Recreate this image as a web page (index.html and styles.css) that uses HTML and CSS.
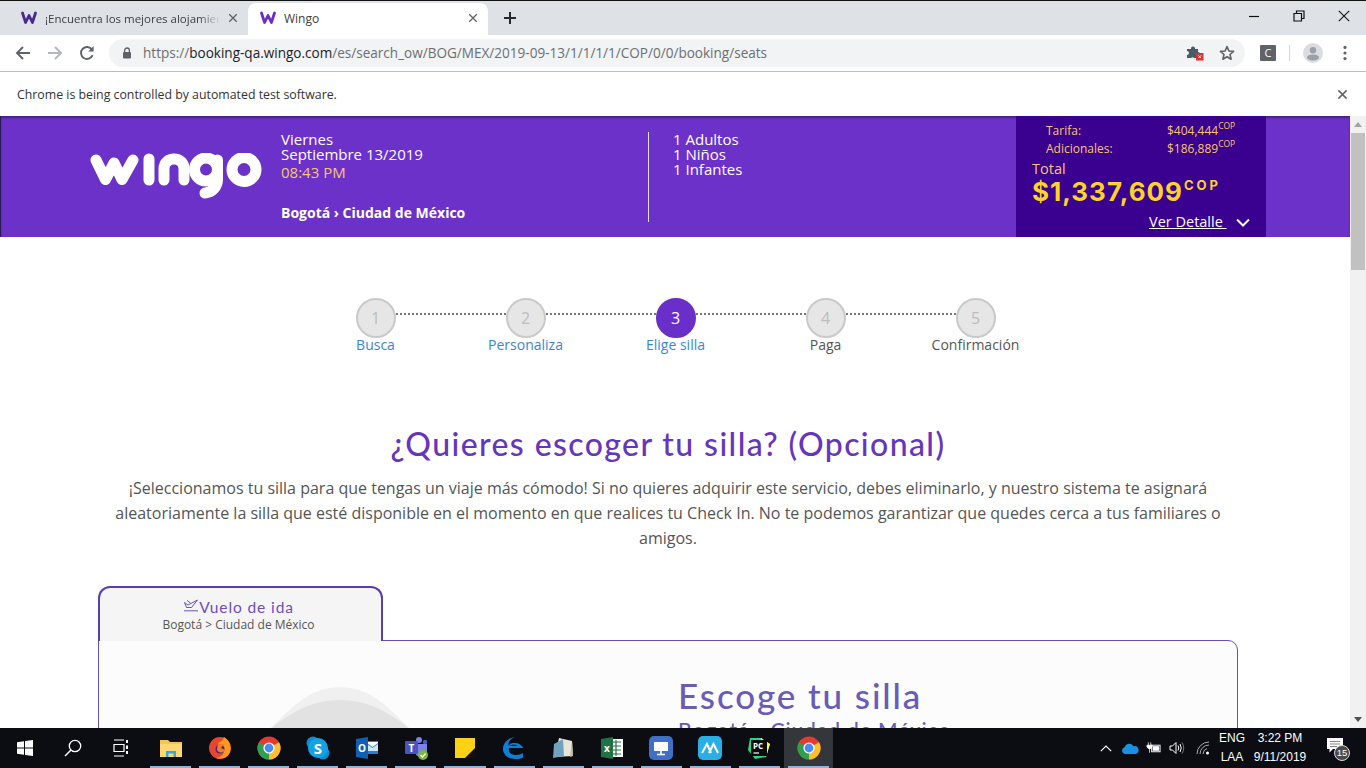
FILE: index.html
```html
<!DOCTYPE html>
<html lang="es">
<head>
<meta charset="utf-8">
<title>Wingo</title>
<link rel="stylesheet" href="styles.css">
</head>
<body>
<svg class="defs" width="0" height="0" aria-hidden="true">
  <symbol id="fav" viewBox="0 0 16 14"><path d="M1.5 2 L4.6 11.5 L8 4.5 L11.4 11.5 L14.5 2" fill="none" stroke="currentColor" stroke-width="2.8" stroke-linejoin="round" stroke-linecap="round"/></symbol>
  <symbol id="x" viewBox="0 0 12 12"><path d="M1.5 1.5 L10.5 10.5 M10.5 1.5 L1.5 10.5" fill="none" stroke="currentColor" stroke-width="1.6"/></symbol>
  <symbol id="chrome" viewBox="0 0 24 24">
    <circle cx="12" cy="12" r="11.5" fill="#e33b2e"/>
    <path d="M12 12 L22 6.2 A11.5 11.5 0 0 1 12 23.5 Z" fill="#fbc02d"/>
    <path d="M12 12 L12 23.5 A11.5 11.5 0 0 1 2 6.2 Z" fill="#2f9e4f"/>
    <circle cx="12" cy="12" r="5.6" fill="#fff"/><circle cx="12" cy="12" r="4.4" fill="#4a8af4"/>
  </symbol>
</svg>

<header class="tabstrip">
  <div class="tab">
    <svg class="fav fav-dark"><use href="#fav"/></svg>
    <span class="tab-title tab-title-cut">¡Encuentra los mejores alojamientos</span>
    <svg class="tab-x"><use href="#x"/></svg>
  </div>
  <div class="tab tab-active">
    <svg class="fav fav-purple"><use href="#fav"/></svg>
    <span class="tab-title">Wingo</span>
    <svg class="tab-x"><use href="#x"/></svg>
  </div>
  <svg class="newtab" viewBox="0 0 14 14"><path d="M7 1 V13 M1 7 H13" stroke="#26282c" stroke-width="2" fill="none"/></svg>
  <div class="winctl">
    <svg viewBox="0 0 12 12"><path d="M1 6.5 H11" stroke="#111" stroke-width="1.2"/></svg>
    <svg viewBox="0 0 12 12"><path d="M1 3.5 H8.5 V11 H1 Z M3.5 3.5 V1 H11 V8.5 H8.5" stroke="#111" stroke-width="1.2" fill="none"/></svg>
    <svg viewBox="0 0 12 12"><path d="M.8 .8 L11.2 11.2 M11.2 .8 L.8 11.2" stroke="#111" stroke-width="1.1" fill="none"/></svg>
  </div>
</header>

<nav class="toolbar">
  <svg class="nav-ic" viewBox="0 0 16 16"><path d="M15 8 H2 M8 2 L2 8 L8 14" fill="none" stroke="#5f6368" stroke-width="1.9"/></svg>
  <svg class="nav-ic" viewBox="0 0 16 16"><path d="M1 8 H14 M8 2 L14 8 L8 14" fill="none" stroke="#b4b7bb" stroke-width="1.9"/></svg>
  <svg class="nav-ic" viewBox="0 0 16 16"><path d="M13.6 10.2 A6 6 0 1 1 13 4.6" fill="none" stroke="#5f6368" stroke-width="1.9"/><path d="M14.6 1 V6.4 H9.2 Z" fill="#5f6368"/></svg>
  <div class="omnibox">
    <svg class="lock" viewBox="0 0 10 12"><path d="M2.6 5 V3.4 A2.4 2.4 0 0 1 7.4 3.4 V5" fill="none" stroke="#5f6368" stroke-width="1.3"/><rect x="1" y="5" width="8" height="6.5" rx="1" fill="#5f6368"/></svg>
    <span class="url">https://<b>booking-qa.wingo.com</b>/es/search_ow/BOG/MEX/2019-09-13/1/1/1/1/COP/0/0/booking/seats</span>
    <svg class="ext" viewBox="0 0 18 18"><path d="M1 5 H5 A2 2 0 0 1 9 4 V5 H12 V8 A2 2 0 0 1 12 12 V14 H8 A2 2 0 0 0 5 14 H1 V11 A2 2 0 0 0 1 7 Z" fill="#4a5a66"/><rect x="10" y="9" width="7.5" height="7.5" fill="#d9333a"/><path d="M12.4 11.4 L15.1 14.1 M15.1 11.4 L12.4 14.1" stroke="#fff"/></svg>
    <svg class="star" viewBox="0 0 16 16"><path d="M8 1.6 L9.9 6 L14.6 6.4 L11 9.5 L12.1 14.2 L8 11.7 L3.9 14.2 L5 9.5 L1.4 6.4 L6.1 6 Z" fill="none" stroke="#5f6368" stroke-width="1.6" stroke-linejoin="round"/></svg>
  </div>
  <span class="cbtn">C</span>
  <span class="sep"></span>
  <svg class="avatar" viewBox="0 0 20 20"><circle cx="10" cy="10" r="10" fill="#dadce0"/><circle cx="10" cy="7.2" r="3.2" fill="#9aa0a6"/><ellipse cx="10" cy="14.4" rx="6" ry="3" fill="#9aa0a6"/></svg>
  <svg class="dots" viewBox="0 0 4 16"><circle cx="2" cy="2.4" r="1.6" fill="#5f6368"/><circle cx="2" cy="8" r="1.6" fill="#5f6368"/><circle cx="2" cy="13.6" r="1.6" fill="#5f6368"/></svg>
</nav>

<div class="infobar">
  <span>Chrome is being controlled by automated test software.</span>
  <svg class="info-x"><use href="#x"/></svg>
</div>

<div class="viewport">
  <main class="page">
    <section class="brandbar">
      <svg class="logo" viewBox="0 0 172 46" role="img" aria-label="wingo">
        <g fill="none" stroke="#fff" stroke-width="11" stroke-linecap="round" stroke-linejoin="round">
          <path d="M6 7 L15.5 26.5 L24 10 L32 26.5 L43 7"/>
          <path d="M59 6 V27"/>
          <path d="M74 27 V16 C74 9 79 6 84 6 C90 6 94 10 94 16 V27"/>
          <circle cx="116" cy="16.5" r="11.5"/>
          <path d="M127.500 7 V26 C127.500 34 122 39.500 115 40"/>
          <circle cx="154" cy="16.500" r="12"/>
        </g>
      </svg>
      <div class="flight">
        <p>Viernes</p>
        <p>Septiembre 13/2019</p>
        <p class="flight-time">08:43 PM</p>
        <p class="flight-route">Bogotá › Ciudad de México</p>
      </div>
      <div class="pax">
        <p>1 Adultos</p>
        <p>1 Niños</p>
        <p>1 Infantes</p>
      </div>
      <aside class="price">
        <div class="price-row"><span>Tarifa:</span><span class="amount">$404,444<sup>COP</sup></span></div>
        <div class="price-row"><span>Adicionales:</span><span class="amount">$186,889<sup>COP</sup></span></div>
        <div class="total-label">Total</div>
        <div class="total">$1,337,609<sup>COP</sup></div>
        <div class="detail"><a>Ver Detalle&nbsp;</a><svg viewBox="0 0 14 9"><path d="M1 1.500 L7 7.500 L13 1.500" fill="none" stroke="#fff" stroke-width="2"/></svg></div>
      </aside>
    </section>

    <ol class="steps">
      <li class="step step-done"><span class="dot">1</span><span class="step-label">Busca</span></li>
      <li class="step step-done"><span class="dot">2</span><span class="step-label">Personaliza</span></li>
      <li class="step step-done step-current"><span class="dot">3</span><span class="step-label">Elige silla</span></li>
      <li class="step"><span class="dot">4</span><span class="step-label">Paga</span></li>
      <li class="step step-last"><span class="dot">5</span><span class="step-label">Confirmación</span></li>
    </ol>

    <div class="content">
      <h1>¿Quieres escoger tu silla? (Opcional)</h1>
      <p class="lead">¡Seleccionamos tu silla para que tengas un viaje más cómodo! Si no quieres adquirir este servicio, debes eliminarlo, y nuestro sistema te asignará aleatoriamente la silla que esté disponible en el momento en que realices tu Check In. No te podemos garantizar que quedes cerca a tus familiares o amigos.</p>

      <div class="flight-tab">
        <div class="flight-tab-title">
          <svg viewBox="0 0 16 13"><path d="M1 11.800 H15 M1.500 3.500 L5 6 L14.500 1 L8.500 8.500 L3.500 8.500 Z M4 1.500 L7.500 4" fill="none" stroke="#6a4fc0" stroke-width="1"/></svg>
          <span>Vuelo de ida</span>
        </div>
        <div class="flight-tab-route">Bogotá &gt; Ciudad de México</div>
      </div>
      <div class="seat-card">
        <div class="plane-col">
          <svg viewBox="0 0 190 60" class="plane"><path d="M8 60 C45 20 65 0 95 0 C125 0 145 20 182 60 Z" fill="#f0f0f0"/><path d="M6 60 C36 30 62 13 95 13 C128 13 154 30 184 60 Z" fill="#e2e2e2"/></svg>
        </div>
        <div class="seat-info">
          <h2>Escoge tu silla</h2>
          <h3>Bogotá - Ciudad de México</h3>
        </div>
      </div>
    </div>
  </main>
  <div class="scrollbar">
    <svg viewBox="0 0 8 5"><path d="M4 0 L8 5 H0 Z" fill="#a3a3a3"/></svg>
    <div class="thumb"></div>
    <svg class="arrow-down" viewBox="0 0 8 5"><path d="M0 0 H8 L4 5 Z" fill="#505050"/></svg>
  </div>
</div>

<footer class="taskbar">
  <div class="task-slot"><svg class="ic-win" viewBox="0 0 16 16"><path d="M0 2.300 L7 1.300 V7.500 H0 Z M8 1.100 L16 0 V7.500 H8 Z M0 8.500 H7 V14.700 L0 13.700 Z M8 8.500 H16 V16 L8 14.900 Z" fill="#fff"/></svg></div>
  <div class="task-slot"><svg class="ic-m" viewBox="0 0 18 18"><circle cx="11" cy="7" r="5.700" fill="none" stroke="#fff" stroke-width="1.300"/><path d="M7 11 L1 17" stroke="#fff" stroke-width="1.500"/></svg></div>
  <div class="task-slot task-slot-last-fixed"><svg class="ic-m" viewBox="0 0 18 18"><path d="M2 1 H12 M2 17 H12 M2 5.500 H12 V12.500 H2 Z" fill="none" stroke="#fff" stroke-width="1.200"/><path d="M15 1 V4 M15 6.500 V10 M15 12 V15" stroke="#fff" stroke-width="2"/></svg></div>
  <div class="task-slot open"><svg class="ic-l" viewBox="0 0 24 20"><path d="M1 2 H9 L11 4 H23 V19 H1 Z" fill="#f5c64f"/><rect x="1" y="6" width="22" height="13" fill="#fbd873"/><path d="M7 19 V13 H17 V19 H14.500 V15.500 H9.500 V19 Z" fill="#3da5dc"/></svg></div>
  <div class="task-slot open"><svg class="ic-l" viewBox="0 0 24 24"><circle cx="12" cy="12" r="11" fill="#e8452c"/><path d="M16 1 C23 5 24 14 21 18 C18 23 12 23 8 22 C13 21 17 18 16 13 C15 9 11 9 10 12 C9 9 10 6 14 5 Z" fill="#ff9a1f"/><circle cx="12" cy="13" r="4.500" fill="#3b2a8c"/><path d="M10 8 H16 L13 12 L17 14 C15 18 9 17 9 13 Z" fill="#ff7a1a"/></svg></div>
  <div class="task-slot open"><svg class="ic-l"><use href="#chrome"/></svg></div>
  <div class="task-slot open"><svg class="ic-l" viewBox="0 0 24 24"><circle cx="7" cy="7" r="6.500" fill="#0b8fd4"/><circle cx="17" cy="17" r="6.500" fill="#0b8fd4"/><circle cx="12" cy="12" r="10" fill="#12a3e6"/><text x="12" y="17.500" class="ic-letter">S</text></svg></div>
  <div class="task-slot open"><svg class="ic-l" viewBox="0 0 24 24"><path d="M10 5 H23 V18 H10 Z" fill="#2b7cd3"/><path d="M12 7 L17.500 11 L23 7 V6 H12 Z" fill="#fff"/><path d="M12 8 L17.500 12 L23 8 V15 H12 Z" fill="#cfe5fa"/><path d="M1 3 L13 1 V23 L1 21 Z" fill="#0f5fb5"/><text x="7" y="16" class="ic-letter ic-letter-s">O</text></svg></div>
  <div class="task-slot open"><svg class="ic-l" viewBox="0 0 24 24"><circle cx="15" cy="4" r="3" fill="#7b83eb"/><circle cx="21" cy="6" r="2.200" fill="#5059c9"/><path d="M11 8 H23 V16 C23 20 19 21 17 21 C13 21 11 18 11 15 Z" fill="#7b83eb"/><rect x="1" y="5" width="13" height="13" rx="1" fill="#4b53bc"/><text x="7.500" y="15.500" class="ic-letter ic-letter-s">T</text><circle cx="19" cy="19" r="5" fill="#7cb342"/><path d="M16.500 19 L18.500 21 L21.500 17.500" fill="none" stroke="#fff" stroke-width="1.300"/></svg></div>
  <div class="task-slot open"><svg class="ic-m2" viewBox="0 0 20 20"><path d="M0 0 H20 V20 H0 Z" fill="#fcd116"/><path d="M10 20 L20 10 V20 Z" fill="#111"/></svg></div>
  <div class="task-slot open"><svg class="ic-l" viewBox="0 0 24 24"><path d="M11 7 A10.500 10 0 0 1 21.500 12 H7 C6 16 9 19 14 19 C17 19 19.500 18 21 17 V21.500 C19 22.700 16.500 23 13.500 23 C5 23 1 18 1 13 C1 7 6 2 13 1 C8 3 6 6 6.500 9.500 C7.500 8 9 7 11 7 Z M7.500 10 C8 8.500 14.500 8 15.500 10 Z" fill="#0f7fd6" fill-rule="evenodd"/></svg></div>
  <div class="task-slot open"><svg class="ic-l" viewBox="0 0 24 24"><path d="M8 2 L21 5 L22 20 L4 21 Z" fill="#e8e6d8"/><path d="M3 8 L12 3 L13 20 L2 22 Z" fill="#6fa3c0"/><path d="M21 5 L22 20 L19 21 Z" fill="#bdb9a0"/></svg></div>
  <div class="task-slot open"><svg class="ic-l" viewBox="0 0 24 24"><rect x="9" y="3" width="14" height="18" fill="#fff"/><path d="M13 6 H21 M13 10 H21 M13 14 H21 M13 18 H21 M16 4 V20" stroke="#217346" stroke-width="1.200"/><path d="M1 3 L13 1 V23 L1 21 Z" fill="#217346"/><text x="7" y="16" class="ic-letter ic-letter-s">x</text></svg></div>
  <div class="task-slot open"><svg class="ic-l" viewBox="0 0 24 24"><rect width="24" height="24" rx="5" fill="#3f6fc7"/><rect x="5" y="6" width="14" height="9" fill="#fff"/><path d="M12 15 V18 M8 18.500 H16" stroke="#fff" stroke-width="1.600"/></svg></div>
  <div class="task-slot open"><svg class="ic-l" viewBox="0 0 24 24"><rect width="24" height="24" rx="5" fill="#29aee6"/><path d="M4 17 L9 8 L13 17 M11 17 L15.500 8 L20 17" fill="none" stroke="#fff" stroke-width="2"/></svg></div>
  <div class="task-slot open"><svg class="ic-l" viewBox="0 0 24 24"><path d="M3 2 H14 L23 8 L19 21 L8 23 L1 14 Z" fill="#21d789"/><path d="M14 2 L23 8 L19 21 L13 12 Z" fill="#fcf84a"/><rect x="4" y="4" width="16" height="16" fill="#0c0c0c"/><text x="11" y="12.500" class="ic-letter ic-letter-pc">PC</text><path d="M6.500 17 H12" stroke="#fff" stroke-width="1.200"/></svg></div>
  <div class="task-slot open active"><svg class="ic-l"><use href="#chrome"/></svg></div>

  <div class="tray">
    <svg class="tr-chev" viewBox="0 0 12 7"><path d="M.8 6.200 L6 1 L11.200 6.200" fill="none" stroke="#fff" stroke-width="1.200"/></svg>
    <svg class="tr-cloud" viewBox="0 0 18 11"><path d="M4 11 A3.500 3.500 0 0 1 3.500 4.200 A5 5 0 0 1 12.500 3.200 A4 4 0 0 1 14.500 11 Z" fill="#1a8fe3"/></svg>
    <svg class="tr-bat" viewBox="0 0 16 12"><path d="M2.500 0 V3 M5 0 V3 M1 3 H6.500 V5 L3.700 7.500 L1 5 Z M3.700 7.500 V11" fill="#fff" stroke="#fff" stroke-width=".8"/><rect x="6" y="3" width="9" height="7" fill="none" stroke="#fff"/><rect x="7" y="4" width="7" height="5" fill="#fff"/></svg>
    <svg class="tr-vol" viewBox="0 0 16 14"><path d="M1 5 H3.500 L7 1.500 V12.500 L3.500 9 H1 Z" fill="none" stroke="#fff"/><path d="M9 4.500 Q10.500 7 9 9.500 M11 3 Q13.500 7 11 11" fill="none" stroke="#fff"/><path d="M13 1.500 Q16.500 7 13 12.500" fill="none" stroke="#777"/></svg>
    <svg class="tr-wifi" viewBox="0 0 14 14"><path d="M1 13 A12 12 0 0 1 13 1 M4 13 A9 9 0 0 1 13 4 M7 13 A6 6 0 0 1 11 7.500" fill="none" stroke="#aaa"/><circle cx="11.500" cy="12" r="1.500" fill="#fff"/></svg>
    <div class="tr-lang"><span>ENG</span><span>LAA</span></div>
    <div class="tr-clock"><span>3:22 PM</span><span>9/11/2019</span></div>
    <div class="tr-note">
      <svg viewBox="0 0 16 15"><path d="M0 0 H16 V11 H6 L2.500 14.500 V11 H0 Z" fill="#fff"/><path d="M3 3.500 H13 M3 6 H13 M3 8.500 H10" stroke="#666" stroke-width=".8"/></svg>
      <span class="badge">15</span>
    </div>
  </div>
</footer>
</body>
</html>
```

FILE: styles.css
```css
* { box-sizing: border-box; }
html, body { margin: 0; padding: 0; }
body {
  width: 1366px; height: 768px; overflow: hidden;
  display: flex; flex-direction: column;
  font-family: "Open Sans", "Noto Sans", sans-serif;
  background: #fff; color: #555;
}
p, h1, h2, h3, ol { margin: 0; padding: 0; }
.defs { position: absolute; }

/* Chrome tab strip */
.tabstrip {
  flex: 0 0 35px; display: flex; align-items: flex-end;
  background: #dee1e6; border-top: 1px solid #111; position: relative;
}
.tab {
  width: 248px; height: 32px; display: flex; align-items: center;
  padding: 0 10px 2px 21px; font-size: 12px; color: #3c4043;
}
.tab-active { width: 240px; background: #fff; border-radius: 8px 8px 0 0; padding-left: 12px; }
.fav { width: 16px; height: 14px; flex: none; }
.fav-dark { color: #4b2a90; }
.fav-purple { color: #6a2fc9; }
.tab-title { flex: 1; margin-left: 8px; white-space: nowrap; overflow: hidden; }
.tab-title-cut { font-size: 11.500px; -webkit-mask-image: linear-gradient(90deg, #000 88%, transparent); mask-image: linear-gradient(90deg, #000 88%, transparent); }
.tab-x { width: 10px; height: 10px; flex: none; margin-left: 8px; color: #5f6368; }
.newtab { width: 14px; height: 14px; margin: 0 0 10px 15px; }
.winctl { margin-left: auto; display: flex; height: 34px; align-items: center; padding-bottom: 4px; }
.winctl svg { width: 12px; height: 12px; margin: 0 16px 0 17px; }
.winctl svg:first-child { margin-left: 0; }

/* Toolbar */
.toolbar {
  flex: 0 0 37px; display: flex; align-items: center; padding: 0 0 1px 15px;
  border-bottom: 1px solid #bdbdbd; background: #fff;
}
.nav-ic { width: 16px; height: 16px; margin-right: 16px; }
.omnibox {
  width: 1136px; height: 28px; margin-left: -2px; border-radius: 14px; background: #f1f3f4;
  display: flex; align-items: center; padding: 0 10px 0 13px;
}
.lock { width: 10px; height: 12px; flex: none; }
.url { margin-left: 11px; font-size: 13.560px; color: #6b6f73; white-space: nowrap; flex: 1; }
.url b { font-weight: 400; color: #1f2124; }
.ext { width: 18px; height: 18px; margin-right: 15px; flex: none; }
.star { width: 16px; height: 16px; flex: none; }
.cbtn {
  width: 16px; height: 16px; margin-left: 15px; background: #5f6368; color: #fff; border-radius: 1px;
  font-size: 11px; line-height: 16px; text-align: center;
}
.sep { width: 1px; height: 16px; margin-left: 13px; background: #d5d7da; }
.avatar { width: 20px; height: 20px; margin-left: 13px; }
.dots { width: 4px; height: 16px; margin-left: 20px; }

/* Automation bar */
.infobar {
  flex: 0 0 44px; display: flex; align-items: center; justify-content: space-between;
  padding: 0 18px 0 17px; font-size: 12.340px; color: #333;
}
.info-x { width: 11px; height: 11px; color: #5f6368; }

/* Web page */
.viewport { flex: 0 0 612px; display: flex; overflow: hidden; }
.page { flex: 1; overflow: hidden; min-width: 0; }
.scrollbar { flex: 0 0 16px; background: #f1f1f1; display: flex; flex-direction: column; align-items: center; padding-top: 6px; }
.scrollbar svg { width: 8px; height: 5px; flex: none; }
.thumb { width: 14px; height: 137px; margin-top: 6px; background: #c1c1c1; flex: none; }
.arrow-down { margin-top: auto; margin-bottom: 6px; }

.brandbar {
  height: 121px; display: flex; background: #6b31c9; color: #fff; border-left: 1px solid #2b1a55;
  box-shadow: inset 0 2px 2px rgba(30,10,70,.45);
}
.logo { width: 172px; height: 46px; margin: 37px 0 0 89px; flex: none; }
.flight { width: 367px; margin-left: 19px; padding-top: 16px; font-size: 15px; line-height: 15px; }
.flight-time { color: #f7c66d; margin-top: 3px; line-height: 15px; }
.flight-route { font-size: 14px; font-weight: 700; margin-top: 24px; line-height: 18px; }
.pax {
  width: 368px; height: 90px; margin-top: 16px; padding: 0 0 0 24px; border-left: 1px solid #e8dcf8;
  font-size: 15px; line-height: 15px;
}
.price {
  width: 250px; flex: none; background: #3a0090; padding: 6px 16px 0 16px;
  color: #f7c66d; font-size: 12px;
}
.price-row { display: flex; height: 18px; line-height: 17px; padding-left: 14px; }
.price-row span:first-child { width: 121px; }
.amount { white-space: nowrap; }
.amount sup { font-size: 8.500px; line-height: 0; vertical-align: 6px; }
.total-label { font-size: 14.500px; line-height: 20px; margin-top: 1px; }
.total {
  font-family: Inter, "Open Sans", sans-serif; font-weight: 700; font-size: 26px; line-height: 26px;
  letter-spacing: 1px; color: #fdd32a; white-space: nowrap;
}
.total sup { font-size: 13px; line-height: 0; vertical-align: 11px; letter-spacing: 3px; margin-left: 1px; font-weight: 700; }
.detail { display: flex; align-items: center; margin: 7px 0 0 117px; color: #fff; font-size: 14.500px; line-height: 20px; white-space: nowrap; }
.detail a { text-decoration: underline; }
.detail svg { width: 14px; height: 9px; margin-left: 9px; flex: none; }

/* Stepper */
.steps { display: grid; grid-template-columns: repeat(5, 150px); margin: 61px 0 0 301px; list-style: none; }
.step { position: relative; display: flex; flex-direction: column; align-items: center; font-size: 14px; line-height: 16px; color: #555; }
.step-label { margin-right: 1px; }
.step-done { color: #3a85d9; }
.dot {
  width: 40px; height: 40px; border-radius: 50%; background: #e6e6e6; border: 2px solid #c9c9c9;
  color: #bdbdbd; font-size: 16px; line-height: 36px; text-align: center; margin-bottom: -1px; padding-right: 1px;
}
.step-current .dot { background: #6a2fc9; border-color: #6a2fc9; color: #fff; }
.step::after {
  content: ""; position: absolute; left: 95px; width: 110px; top: 15px;
  border-top: 2px dotted #777;
}
.step-last::after { display: none; }

/* Content */
.content { width: 1140px; margin: 70px 0 0 98px; }
h1 {
  font-family: Lato, "Open Sans", sans-serif; font-weight: 500; font-size: 32px; line-height: 42px;
  letter-spacing: 1.400px; color: #6536bd; text-align: center;
}
.lead { margin-top: 11px; font-size: 16px; line-height: 25px; color: #555; text-align: center; padding: 0 10px; }
.flight-tab {
  width: 285px; height: 55px; margin-top: 35px; background: #f5f5f5; position: relative; z-index: 1;
  border: 2px solid #5a3db0; border-bottom: 0; border-radius: 12px 12px 0 0; text-align: center; padding: 10px 4px 0 0;
}
.flight-tab-title {
  display: flex; align-items: center; justify-content: center; height: 17px;
  font-family: Lato, "Open Sans", sans-serif; font-size: 15.500px; letter-spacing: .9px; color: #6a4fc0;
}
.flight-tab-title svg { width: 16px; height: 13px; margin-bottom: 3px; }
.flight-tab-route { font-size: 12px; line-height: 16px; color: #555; margin-top: 2px; }
.seat-card {
  height: 200px; margin-top: -1px; display: flex; background: #fcfcfc;
  border: 1px solid #6a4fb5; border-radius: 0 10px 0 0; 
}
.plane-col { width: 579px; flex: none; padding: 46px 0 0 146px; }
.plane { width: 190px; height: 60px; display: block; }
.seat-info { padding-top: 33px; color: #6a5bb8; font-family: Lato, "Open Sans", sans-serif; }
h2 { font-size: 35px; line-height: 42px; font-weight: 500; letter-spacing: 1.900px; }
h3 { font-size: 21px; line-height: 26px; font-weight: 500; letter-spacing: .9px; margin-top: 1px; }

/* Windows taskbar */
.taskbar { flex: 0 0 40px; display: flex; align-items: stretch; background: #0b0d12; padding-left: 1px; }
.task-slot { width: 48px; display: flex; align-items: center; justify-content: center; position: relative; flex: none; }
.task-slot-last-fixed { margin-right: 1px; }
.task-slot.open { width: 49.080px; }
.task-slot.open::after { content: ""; position: absolute; left: 4px; right: 4px; bottom: 0; height: 2px; background: #8ab4dc; }
.task-slot.active { background: #33363a; }
.ic-win { width: 16px; height: 16px; }
.ic-m { width: 18px; height: 18px; }
.ic-m2 { width: 20px; height: 20px; }
.ic-l { width: 24px; height: 24px; }
.ic-letter { font: 700 15px "Open Sans", sans-serif; fill: #fff; text-anchor: middle; }
.ic-letter-s { font-size: 10px; }
.ic-letter-pc { font-size: 8px; }
.tray { margin-left: auto; display: flex; align-items: center; color: #fff; font-family: "Liberation Sans", Arial, sans-serif; font-size: 12px; line-height: 19px; padding-right: 21px; }
.tray svg { flex: none; }
.tr-chev { width: 12px; height: 7px; margin-right: 9px; }
.tr-cloud { width: 18px; height: 11px; margin-right: 6.500px; }
.tr-bat { width: 15px; height: 12px; margin-right: 8.500px; }
.tr-vol { width: 16px; height: 14px; margin-right: 11px; }
.tr-wifi { width: 14px; height: 14px; margin-right: 10px; }
.tr-lang, .tr-clock { display: flex; flex-direction: column; align-items: center; }
.tr-lang { width: 24px; }
.tr-clock { width: 72px; }
.tr-note { position: relative; width: 18px; height: 20px; margin-left: 11px; }
.tr-note svg { width: 16px; height: 15px; display: block; }
.badge {
  position: absolute; left: 7px; top: 7px; width: 16px; height: 16px; border-radius: 50%;
  background: #4a4a4a; border: 1px solid #ddd; font-size: 9.500px; line-height: 14px; text-align: center;
}
```
